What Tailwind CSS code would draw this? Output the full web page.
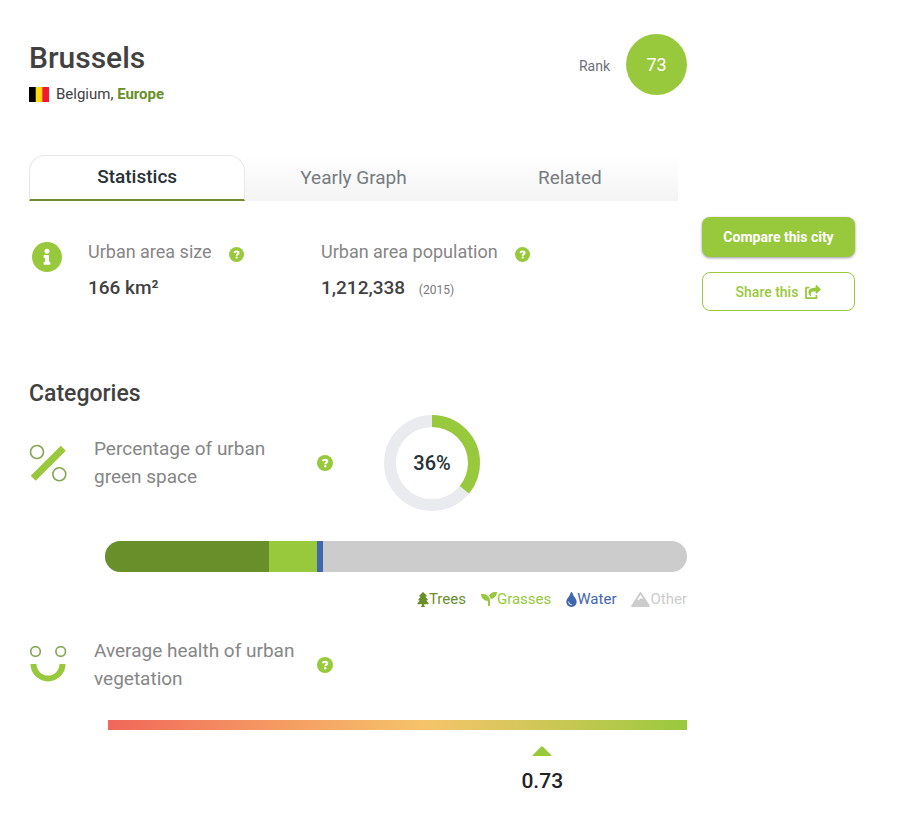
<!DOCTYPE html>
<html lang="en">
<head>
<meta charset="utf-8">
<meta name="viewport" content="width=device-width, initial-scale=1">
<title>Brussels</title>
<script src="https://cdn.jsdelivr.net/npm/@tailwindcss/browser@4"></script>
</head>
<body class="bg-white font-[Roboto,sans-serif] text-[#414141]">
<svg class="hidden" aria-hidden="true">
  <symbol id="help" viewBox="0 0 16 16"><circle cx="8" cy="8" r="8"/><path fill="none" stroke="#fff" stroke-width="2" d="M5.600 6.300C5.900 5.200 6.800 4.700 8 4.700c1.400 0 2.300.600 2.300 1.600C10.300 7.700 8.200 7.500 8.200 9.300"/><circle cx="8.200" cy="11.300" r="1.200" fill="#fff"/></symbol>
</svg>
<div class="flex gap-[15px] pt-[34px] pr-[60px] pb-6 pl-[29px]">
  <main class="min-w-0 flex-1">
    <header class="flex items-start justify-between">
      <div class="pt-1">
        <h1 class="text-[30px] leading-10 font-medium">Brussels</h1>
        <p class="mt-[6px] flex items-center text-[15px] leading-5">
          <svg class="mr-[7px] h-[15px] w-5" viewBox="0 0 20 15" role="img" aria-label="Flag of Belgium"><path fill="#000" d="M0 0h7v15H0z"/><path fill="#fdd90f" d="M6.700 0h7v15h-7z"/><path fill="#f31830" d="M13.300 0H20v15h-6.700z"/></svg>
          <span>Belgium, <a href="#" class="font-bold text-[#688f2a]">Europe</a></span>
        </p>
      </div>
      <div class="flex items-center gap-4">
        <span class="pt-[2px] text-sm text-[#6c6f78]">Rank</span>
        <span class="flex size-[61px] items-center justify-center rounded-full bg-[#98c93c] text-lg text-white">73</span>
      </div>
    </header>

    <nav class="mt-[51px] mr-[9px] grid h-[46px] grid-cols-3 bg-linear-to-b from-white to-[#f4f4f4] text-[19px] text-[#777b80]">
      <a href="#" class="flex items-center justify-center rounded-t-2xl border border-b-2 border-[#e8e8e8] border-b-[#738a35] bg-white font-medium text-[#263238]">Statistics</a>
      <a href="#" class="flex items-center justify-center">Yearly Graph</a>
      <a href="#" class="flex items-center justify-center">Related</a>
    </nav>

    <section class="mt-[37px] flex text-lg leading-7">
      <svg class="mt-1 mr-[26px] ml-[3px] size-[30px] fill-[#98c93c]" viewBox="8 8 496 496" aria-hidden="true"><path d="M256 8C119.043 8 8 119.083 8 256c0 136.997 111.043 248 248 248s248-111.003 248-248C504 119.083 392.957 8 256 8zm0 110c23.196 0 42 18.804 42 42s-18.804 42-42 42-42-18.804-42-42 18.804-42 42-42zm56 254c0 6.627-5.373 12-12 12h-88c-6.627 0-12-5.373-12-12v-24c0-6.627 5.373-12 12-12h12v-64h-12c-6.627 0-12-5.373-12-12v-24c0-6.627 5.373-12 12-12h64c6.627 0 12 5.373 12 12v100h12c6.627 0 12 5.373 12 12v24z"/></svg>
      <dl class="w-[233px]">
        <dt class="flex items-center gap-[17px] text-[#868686]">Urban area size <button type="button" aria-label="About urban area size" class="mt-1"><svg class="size-[15px] fill-[#98c93c]"><use href="#help"/></svg></button></dt>
        <dd class="mt-2 text-[19px] font-medium">166 km²</dd>
      </dl>
      <dl>
        <dt class="flex items-center gap-[17px] text-[#868686]">Urban area population <button type="button" aria-label="About urban area population" class="mt-1"><svg class="size-[15px] fill-[#98c93c]"><use href="#help"/></svg></button></dt>
        <dd class="mt-2 text-[19px] font-medium">1,212,338 <small class="ml-[9px] text-xs font-normal text-[#777]">(2015)</small></dd>
      </dl>
    </section>

    <h2 class="mt-[76px] text-[23px] leading-8 font-medium">Categories</h2>

    <section>
      <div class="mt-[5px] flex items-center">
        <svg class="mr-[26px] h-[38px] w-[39px]" viewBox="0 0 39 38" fill="none" aria-hidden="true"><path stroke="#98c93c" stroke-width="7" d="M4.200 34.300 34.300 4.200"/><circle cx="8" cy="8" r="6.500" stroke="#83a450" stroke-width="1.600"/><circle cx="30.300" cy="30.300" r="6.500" stroke="#83a450" stroke-width="1.600"/></svg>
        <h3 class="w-[223px] pr-5 text-[19px] leading-7 text-[#868686]">Percentage of urban green space</h3>
        <button type="button" aria-label="About green space" class="mr-[51px]"><svg class="size-4 fill-[#98c93c]"><use href="#help"/></svg></button>
        <div class="grid size-24 place-items-center">
          <svg class="col-start-1 row-start-1 size-24 -rotate-90" viewBox="0 0 96 96" fill="none" stroke-width="12" aria-hidden="true"><circle cx="48" cy="48" r="42" stroke="#e9ebee"/><circle cx="48" cy="48" r="42" stroke="#98c93c" pathLength="100" stroke-dasharray="36 64"/></svg>
          <span class="col-start-1 row-start-1 text-xl font-medium text-[#263238]">36%</span>
        </div>
      </div>
      <div class="mt-[30px] ml-[76px] flex h-[31px] overflow-hidden rounded-full bg-[#cccccc]">
        <div class="bg-[#688f2a]" style="width:28.2%"></div>
        <div class="bg-[#98c93c]" style="width:8.2%"></div>
        <div class="bg-[#3f66ae]" style="width:1.1%"></div>
      </div>
      <ul class="mt-[17px] flex justify-end gap-[15px] text-[15px] leading-5">
        <li class="flex items-center text-[#688f2a]"><svg class="h-[15px] w-3 fill-current" viewBox="0 0 384 512" aria-hidden="true"><path d="M378.310 378.490L298.420 288h30.630c9.010 0 16.980-5 20.780-13.060 3.800-8.040 2.550-17.260-3.280-24.050L268.420 160h28.890c9.100 0 17.300-5.350 20.860-13.610 3.520-8.130 1.860-17.590-4.240-24.080L203.660 4.830c-6.030-6.450-17.280-6.450-23.320 0L70.060 122.310c-6.100 6.490-7.750 15.950-4.240 24.080C69.380 154.650 77.590 160 86.690 160h28.890l-78.140 90.910c-5.810 6.780-7.060 15.990-3.270 24.040C37.970 283 45.930 288 54.950 288h30.630L5.690 378.490c-6 6.790-7.360 16.090-3.560 24.260 3.750 8.050 12 13.250 21.010 13.250H160v24.450l-30.290 48.400c-5.320 10.640 2.420 23.160 14.310 23.160h95.960c11.890 0 19.630-12.520 14.310-23.160L224 440.450V416h136.860c9.010 0 17.260-5.200 21.010-13.250 3.800-8.170 2.440-17.470-3.560-24.260z"/></svg>Trees</li>
        <li class="flex items-center text-[#98c93c]"><svg class="size-4 fill-current" viewBox="0 0 512 512" aria-hidden="true"><path d="M64 96H0c0 123.700 100.300 224 224 224v144c0 8.800 7.200 16 16 16h32c8.800 0 16-7.200 16-16V320C288 196.300 187.700 96 64 96zm384-64c-84.200 0-157.400 46.500-195.700 115.200 27.700 30.200 48.200 66.900 59 107.600C424 243.100 512 147.900 512 32h-64z"/></svg>Grasses</li>
        <li class="flex items-center text-[#3f66ae]"><svg class="h-[15px] w-[11px] fill-current" viewBox="0 0 352 512" aria-hidden="true"><path d="M205.220 22.090c-7.940-28.780-49.440-30.120-58.440 0C100.010 179.850 0 222.720 0 333.910 0 432.350 78.720 512 176 512s176-79.650 176-178.090c0-111.750-99.790-153.340-146.780-311.820zM176 448c-61.750 0-112-50.250-112-112 0-8.840 7.160-16 16-16s16 7.160 16 16c0 44.110 35.890 80 80 80 8.840 0 16 7.160 16 16s-7.160 16-16 16z"/></svg>Water</li>
        <li class="flex items-center text-[#cccccc]"><svg class="h-[15px] w-[19px] fill-current" viewBox="0 0 640 512" aria-hidden="true"><path d="M634.920 462.700l-288-448C341.030 5.540 330.890 0 320 0s-21.030 5.540-26.920 14.700l-288 448a32.001 32.001 0 0 0-1.170 32.640A32.004 32.004 0 0 0 32 512h576c11.710 0 22.480-6.390 28.090-16.670a31.983 31.983 0 0 0-1.170-32.630zM320 91.180L405.390 224H320l-64 64-38.060-38.060L320 91.180z"/></svg>Other</li>
      </ul>
    </section>

    <section class="mt-7">
      <div class="flex items-center">
        <svg class="mr-[26px] h-[38px] w-[39px]" viewBox="0 0 39 38" fill="none" aria-hidden="true"><circle cx="6.500" cy="5.500" r="4.800" stroke="#83a450" stroke-width="1.600"/><circle cx="31.700" cy="5.500" r="4.800" stroke="#83a450" stroke-width="1.600"/><path stroke="#98c93c" stroke-width="6" d="M4.500 18a14.500 14.500 0 0 0 29 0"/></svg>
        <h3 class="w-[223px] pr-5 text-[19px] leading-7 text-[#868686]">Average health of urban vegetation</h3>
        <button type="button" aria-label="About vegetation health"><svg class="size-4 fill-[#98c93c]"><use href="#help"/></svg></button>
      </div>
      <div class="mt-[27px] ml-[79px]">
        <div class="h-[10px] bg-linear-to-r from-[#f0665a] via-[#f5c46a] via-55% to-[#98c93c]"></div>
        <div class="flex pt-4">
          <div style="width:75%"></div>
          <div class="flex w-0 flex-col items-center">
            <svg class="h-[10px] w-5 shrink-0" viewBox="0 0 20 10" aria-hidden="true"><path fill="#98c93c" d="M1 10Q0 10 .800 9L9 .800Q10 0 11 .800L19.200 9Q20 10 19 10z"/></svg>
            <span class="mt-[10px] text-[21px] leading-[30px] font-medium text-[#222]">0.73</span>
          </div>
        </div>
      </div>
    </section>
  </main>

  <aside class="mt-[183px] flex w-[153px] shrink-0 flex-col gap-[15px] text-sm font-bold">
    <button type="button" class="h-10 rounded-lg bg-[#98c93c] text-white shadow-[0_1px_3px_rgba(0,0,0,0.4)]">Compare this city</button>
    <button type="button" class="flex h-[39px] items-center justify-center gap-[7px] rounded-lg border border-[#98c93c] font-medium text-[#98c93c]">Share this <svg class="h-[14px] w-4 fill-current" viewBox="0 0 576 512" aria-hidden="true"><path d="M568.482 177.448L424.479 313.433C409.300 327.768 384 317.140 384 295.985v-71.963c-144.575.970-205.566 35.113-164.775 171.353 4.483 14.973-12.846 26.567-25.006 17.330C155.252 383.105 120 326.488 120 269.339c0-143.937 117.599-172.500 264-173.312V24.012c0-21.174 25.317-31.768 40.479-17.448l144.003 135.988c10.020 9.463 10.028 25.425 0 34.896zM384 379.128V448H64V128h50.916a11.990 11.990 0 0 0 8.648-3.693c14.953-15.568 32.237-27.890 51.014-37.676C185.708 80.830 181.584 64 169.033 64H48C21.490 64 0 85.490 0 112v352c0 26.510 21.490 48 48 48h352c26.510 0 48-21.490 48-48v-88.806c0-8.288-8.197-14.066-16.011-11.302a71.830 71.830 0 0 1-34.189 3.377c-7.270-1.046-13.800 4.514-13.800 11.859z"/></svg></button>
  </aside>
</div>
</body>
</html>
